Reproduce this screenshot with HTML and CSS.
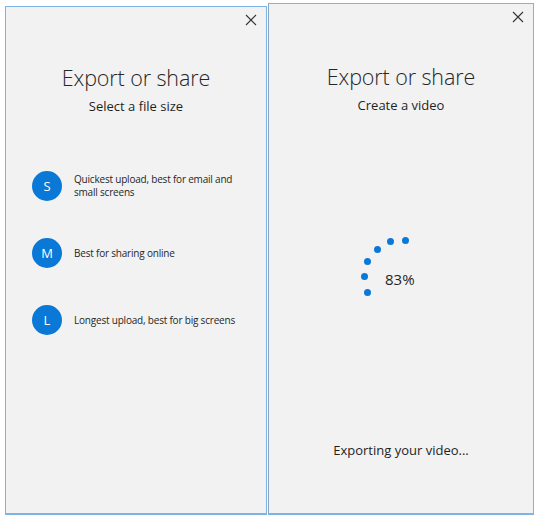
FILE: index.html
```html
<!DOCTYPE html>
<html>
<head>
<meta charset="utf-8">
<link rel="stylesheet" href="styles.css">
</head>
<body>
<div class="stage">
  <section class="panel panel-left">
    <div class="bar">
      <svg class="close" width="12" height="12" viewBox="0 0 12 12"><path d="M1 1 L11 11 M11 1 L1 11" stroke="#333" stroke-width="1.1" fill="none"/></svg>
    </div>
    <h1 class="title">Export or share</h1>
    <p class="subtitle">Select a file size</p>
    <ul class="options">
      <li class="option"><span class="badge">S</span><span class="opt-text">Quickest upload, best for email and<br>small screens</span></li>
      <li class="option"><span class="badge">M</span><span class="opt-text">Best for sharing online</span></li>
      <li class="option"><span class="badge">L</span><span class="opt-text">Longest upload, best for big screens</span></li>
    </ul>
  </section>
  <section class="panel panel-right">
    <div class="bar">
      <svg class="close" width="12" height="12" viewBox="0 0 12 12"><path d="M1 1 L11 11 M11 1 L1 11" stroke="#333" stroke-width="1.1" fill="none"/></svg>
    </div>
    <h1 class="title title-right">Export or share</h1>
    <p class="subtitle">Create a video</p>
    <div class="progress">
      <span class="dot" style="left:41px;top:0px"></span>
      <span class="dot" style="left:26px;top:1px"></span>
      <span class="dot" style="left:13px;top:9px"></span>
      <span class="dot" style="left:3px;top:21px"></span>
      <span class="dot" style="left:0px;top:36px"></span>
      <span class="dot" style="left:3px;top:52px"></span>
      <span class="percent">83%</span>
    </div>
    <p class="status">Exporting your video...</p>
  </section>
</div>
</body>
</html>
```
FILE: styles.css
```css
html, body {
  margin: 0;
  padding: 0;
  background: #ffffff;
}
body {
  font-family: "Open Sans", "Noto Sans", sans-serif;
  color: #1f1f1f;
  width: 540px;
  height: 524px;
  overflow: hidden;
}
.stage {
  display: flex;
  align-items: flex-start;
  gap: 1px;
  padding: 3px 0 0 5px;
}
.panel {
  box-sizing: border-box;
  background: #f2f2f2;
  border: 1px solid #7cb4e6;
  border-bottom: 2px solid #7cb4e6;
  display: flex;
  flex-direction: column;
  align-items: center;
}
.panel-left {
  width: 262px;
  height: 509px;
  margin-top: 3px;
}
.panel-right {
  width: 266px;
  height: 512px;
  border-left-color: #8aa6bf;
}
.bar {
  align-self: stretch;
  display: flex;
  justify-content: flex-end;
  padding: 7px 9px 0 0;
  height: 20px;
}
.close {
  display: block;
}
.title {
  margin: 29px 0 0;
  font-weight: 300;
  font-size: 21.5px;
  line-height: 30px;
  color: #262626;
  letter-spacing: -0.1px;
}
.title-right {
  margin-top: 31px;
}
.subtitle {
  margin: 4px 0 0;
  font-size: 13px;
  line-height: 18px;
  color: #1f1f1f;
}
.options {
  list-style: none;
  margin: 56px 0 0;
  padding: 0 0 0 26px;
  align-self: stretch;
  display: flex;
  flex-direction: column;
  gap: 37px;
}
.option {
  display: flex;
  align-items: center;
  gap: 12px;
  height: 30px;
}
.badge {
  flex: none;
  width: 30px;
  height: 30px;
  border-radius: 50%;
  background: #0a78d7;
  color: #fff;
  font-size: 13px;
  display: flex;
  align-items: center;
  justify-content: center;
}
.opt-text {
  font-size: 10px;
  letter-spacing: -0.2px;
  line-height: 13px;
  color: #262626;
  white-space: nowrap;
}
.progress {
  position: relative;
  align-self: flex-start;
  margin: 123px 0 0 92px;
  height: 59px;
  width: 60px;
  padding: 32px 0 0 24px;
  box-sizing: border-box;
}
.dot {
  position: absolute;
  width: 7px;
  height: 7px;
  border-radius: 50%;
  background: #0a78d7;
}
.percent {
  display: block;
  font-size: 15px;
  line-height: 20px;
  color: #262626;
}
.status {
  margin: 145px 0 0;
  font-size: 13px;
  color: #1f1f1f;
}
```
